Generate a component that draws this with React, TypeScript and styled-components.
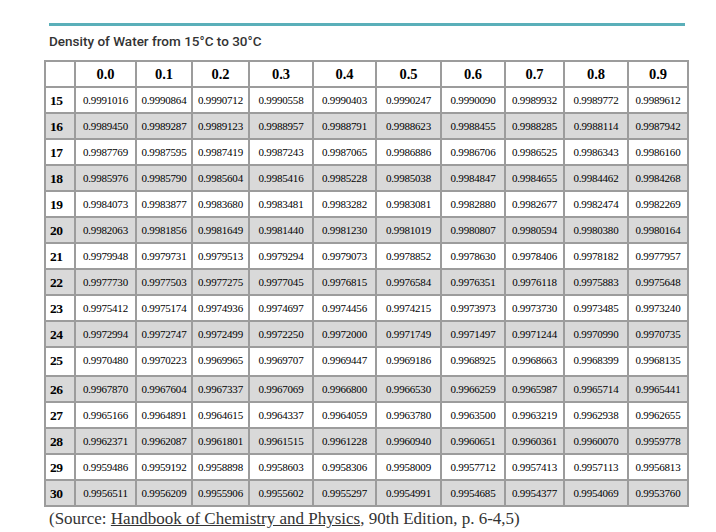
import React from 'react';
import styled, { createGlobalStyle } from 'styled-components';

const GlobalStyle = createGlobalStyle`
  html, body {
    margin: 0;
    padding: 0;
    background: #ffffff;
  }
`;

const PageStyled = styled.div`
  padding: 23px 0 0 44px;
  width: 716px;
  box-sizing: border-box;
`;

const AccentLine = styled.div`
  width: 636px;
  height: 3px;
  margin-left: 5px;
  background: #5aafb9;
`;

const Title = styled.h3`
  margin: 6px 0 0 5px;
  font-family: Roboto, 'Liberation Sans', sans-serif;
  font-weight: 500;
  font-size: 13.5px;
  line-height: 18px;
  color: #333333;
`;

const TableStyled = styled.table`
  margin-top: 10px;
  width: 643px;
  table-layout: fixed;
  border-collapse: collapse;
  border: 2px solid #9c9c9c;
  font-family: 'Liberation Serif', 'Times New Roman', serif;
  color: #000000;
`;

const RowStyled = styled.tr<{ $shaded?: boolean; $tall?: boolean }>`
  height: ${(p) => (p.$tall ? '29px' : '26px')};
  background: ${(p) => (p.$shaded ? '#d9d9d9' : '#ffffff')};
`;

const HeadCell = styled.th`
  border: 2px solid #9c9c9c;
  padding: 0;
  height: 22px;
  font-size: 14.5px;
  font-weight: bold;
  text-align: center;
  vertical-align: middle;
`;

const LabelCell = styled.th`
  border: 2px solid #9c9c9c;
  padding: 5px 0 0 4px;
  font-size: 13.5px;
  font-weight: bold;
  text-align: left;
  vertical-align: top;
  line-height: 15px;
  letter-spacing: -0.5px;
`;

const ValueCell = styled.td`
  border: 2px solid #9c9c9c;
  padding: 5px 0 0 0;
  font-size: 11px;
  letter-spacing: -0.2px;
  text-align: center;
  vertical-align: top;
  line-height: 14px;
  white-space: nowrap;
`;

const Source = styled.p`
  margin: 2px 0 0 5px;
  font-family: 'Liberation Serif', 'Times New Roman', serif;
  font-size: 17px;
  line-height: 20px;
  color: #333333;
`;

const SourceLink = styled.span`
  text-decoration: underline;
`;

const columns = ['0.0', '0.1', '0.2', '0.3', '0.4', '0.5', '0.6', '0.7', '0.8', '0.9'];
const widths = [30, 61, 56, 57, 64, 63, 65, 64, 59, 64, 60];

const data: [number, string[]][] = [
  [15, ['0.9991016', '0.9990864', '0.9990712', '0.9990558', '0.9990403', '0.9990247', '0.9990090', '0.9989932', '0.9989772', '0.9989612']],
  [16, ['0.9989450', '0.9989287', '0.9989123', '0.9988957', '0.9988791', '0.9988623', '0.9988455', '0.9988285', '0.9988114', '0.9987942']],
  [17, ['0.9987769', '0.9987595', '0.9987419', '0.9987243', '0.9987065', '0.9986886', '0.9986706', '0.9986525', '0.9986343', '0.9986160']],
  [18, ['0.9985976', '0.9985790', '0.9985604', '0.9985416', '0.9985228', '0.9985038', '0.9984847', '0.9984655', '0.9984462', '0.9984268']],
  [19, ['0.9984073', '0.9983877', '0.9983680', '0.9983481', '0.9983282', '0.9983081', '0.9982880', '0.9982677', '0.9982474', '0.9982269']],
  [20, ['0.9982063', '0.9981856', '0.9981649', '0.9981440', '0.9981230', '0.9981019', '0.9980807', '0.9980594', '0.9980380', '0.9980164']],
  [21, ['0.9979948', '0.9979731', '0.9979513', '0.9979294', '0.9979073', '0.9978852', '0.9978630', '0.9978406', '0.9978182', '0.9977957']],
  [22, ['0.9977730', '0.9977503', '0.9977275', '0.9977045', '0.9976815', '0.9976584', '0.9976351', '0.9976118', '0.9975883', '0.9975648']],
  [23, ['0.9975412', '0.9975174', '0.9974936', '0.9974697', '0.9974456', '0.9974215', '0.9973973', '0.9973730', '0.9973485', '0.9973240']],
  [24, ['0.9972994', '0.9972747', '0.9972499', '0.9972250', '0.9972000', '0.9971749', '0.9971497', '0.9971244', '0.9970990', '0.9970735']],
  [25, ['0.9970480', '0.9970223', '0.9969965', '0.9969707', '0.9969447', '0.9969186', '0.9968925', '0.9968663', '0.9968399', '0.9968135']],
  [26, ['0.9967870', '0.9967604', '0.9967337', '0.9967069', '0.9966800', '0.9966530', '0.9966259', '0.9965987', '0.9965714', '0.9965441']],
  [27, ['0.9965166', '0.9964891', '0.9964615', '0.9964337', '0.9964059', '0.9963780', '0.9963500', '0.9963219', '0.9962938', '0.9962655']],
  [28, ['0.9962371', '0.9962087', '0.9961801', '0.9961515', '0.9961228', '0.9960940', '0.9960651', '0.9960361', '0.9960070', '0.9959778']],
  [29, ['0.9959486', '0.9959192', '0.9958898', '0.9958603', '0.9958306', '0.9958009', '0.9957712', '0.9957413', '0.9957113', '0.9956813']],
  [30, ['0.9956511', '0.9956209', '0.9955906', '0.9955602', '0.9955297', '0.9954991', '0.9954685', '0.9954377', '0.9954069', '0.9953760']],
];

const App: React.FC = () => {
  return (
    <>
      <GlobalStyle />
      <PageStyled>
        <AccentLine />
        <Title>Density of Water from 15°C to 30°C</Title>
        <TableStyled>
          <colgroup>
            {widths.map((w, i) => (
              <col key={i} style={{ width: w }} />
            ))}
          </colgroup>
          <tbody>
            <RowStyled>
              <HeadCell />
              {columns.map((c) => (
                <HeadCell key={c}>{c}</HeadCell>
              ))}
            </RowStyled>
            {data.map(([temp, values]) => (
              <RowStyled key={temp} $shaded={temp % 2 === 0} $tall={temp === 25}>
                <LabelCell>{temp}</LabelCell>
                {values.map((v, i) => (
                  <ValueCell key={i}>{v}</ValueCell>
                ))}
              </RowStyled>
            ))}
          </tbody>
        </TableStyled>
        <Source>
          (Source: <SourceLink>Handbook of Chemistry and Physics</SourceLink>, 90th Edition, p. 6-4,5)
        </Source>
      </PageStyled>
    </>
  );
};

export default App;
